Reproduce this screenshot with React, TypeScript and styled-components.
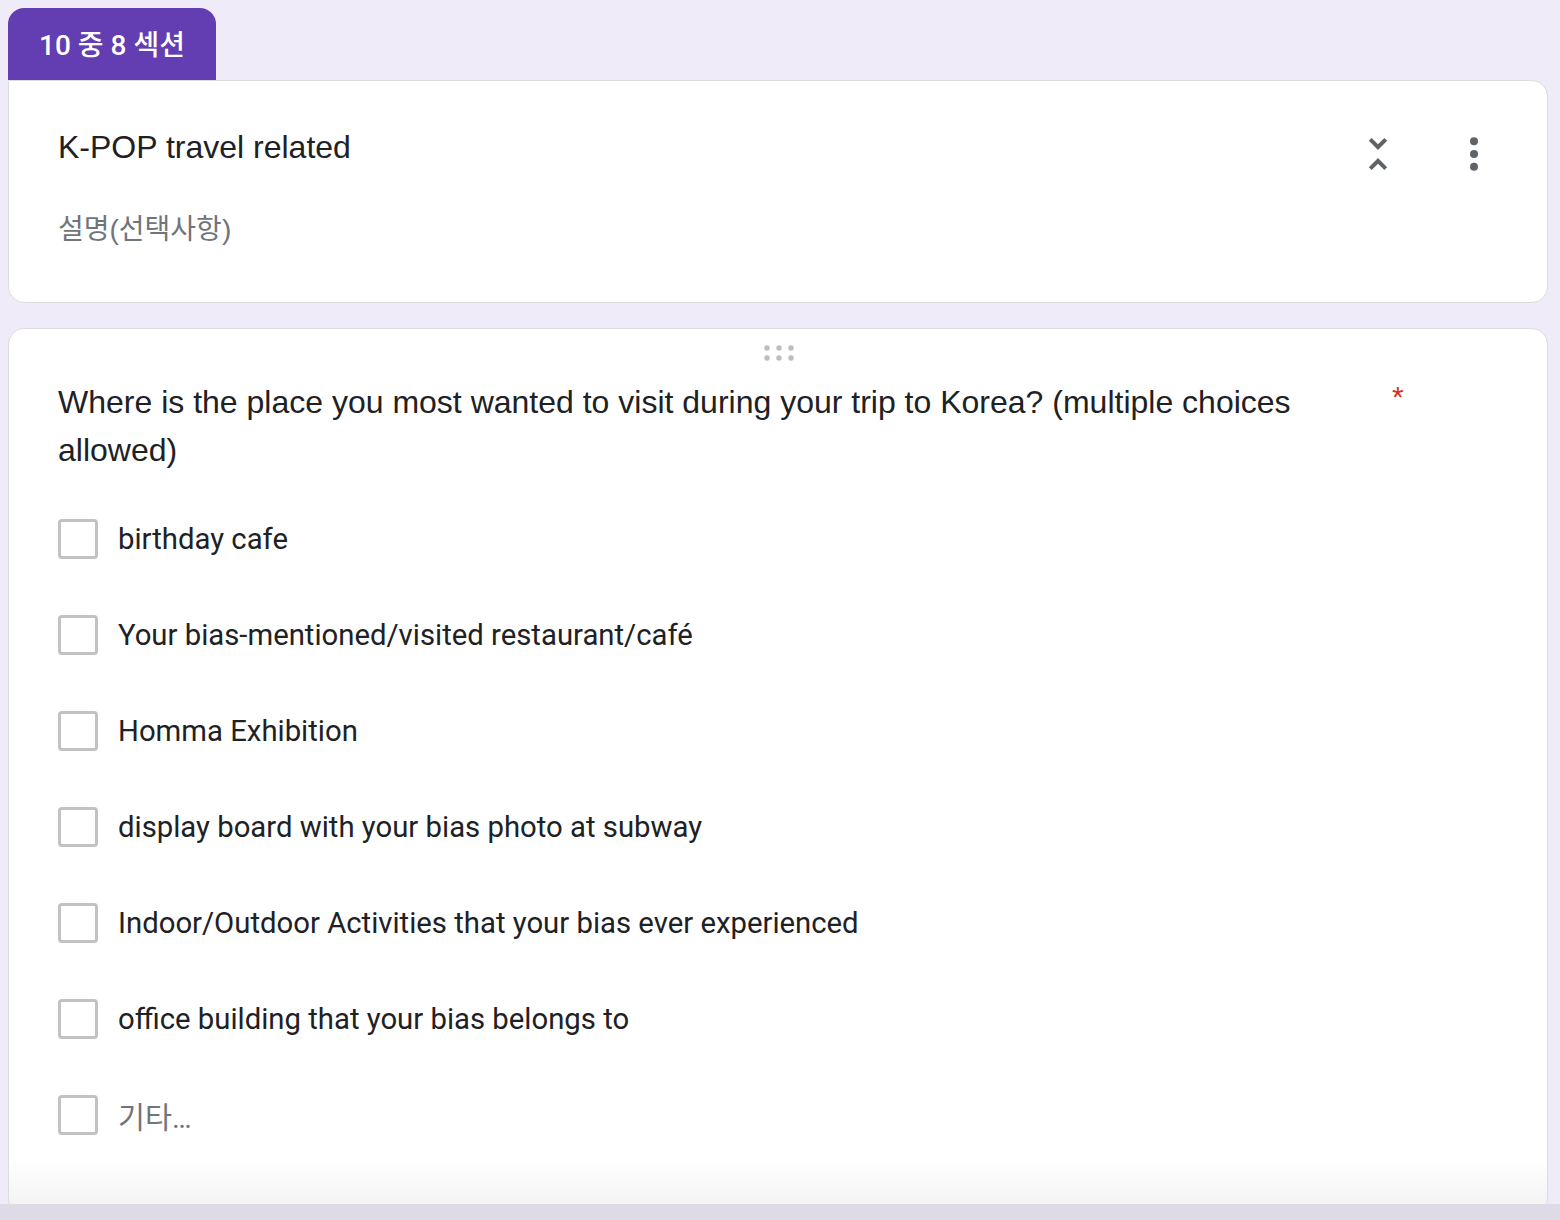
import React from "react";
import styled, { createGlobalStyle } from "styled-components";

const GlobalStyle = createGlobalStyle`
  html, body {
    margin: 0;
    padding: 0;
    background: #f0ebf8;
  }
  body {
    font-family: "Roboto", "Noto Sans CJK KR", sans-serif;
    color: #202124;
  }
`;

const Page = styled.div`
  width: 1560px;
  height: 1220px;
  overflow: hidden;
  display: flex;
  flex-direction: column;
`;

const Content = styled.div`
  padding: 8px 12px 0 8px;
  flex: 1;
  overflow: hidden;
`;

const SectionTab = styled.div`
  box-sizing: border-box;
  width: 208px;
  height: 72px;
  padding-bottom: 3px;
  background: #633db2;
  border-radius: 16px 16px 0 0;
  color: #fff;
  font-size: 28px;
  font-weight: 500;
  display: flex;
  align-items: center;
  justify-content: center;
`;

const Card = styled.div<{ $attached?: boolean }>`
  box-sizing: border-box;
  width: 1540px;
  background: #fff;
  border: 1px solid #dadce0;
  border-radius: ${(p) => (p.$attached ? "0 16px 16px 16px" : "16px")};
`;

const HeaderCard = styled(Card)`
  height: 223px;
  padding: 46px 49px 0 49px;
  display: flex;
  align-items: flex-start;
`;

const HeaderText = styled.div`
  flex: 1;
  display: flex;
  flex-direction: column;
  gap: 43px;
`;

const SectionTitle = styled.div`
  font-family: "Liberation Sans", Arial, "Noto Sans CJK KR", sans-serif;
  font-size: 32px;
  line-height: 40px;
  color: #202124;
`;

const Description = styled.div`
  font-family: "Liberation Sans", Arial, "Noto Sans CJK KR", sans-serif;
  font-size: 28px;
  line-height: 40px;
  color: #70757a;
`;

const Actions = styled.div`
  display: flex;
  gap: 48px;
  margin-top: 3px;
  margin-right: 0;
`;

const IconButton = styled.div`
  width: 48px;
  height: 48px;
  display: flex;
  align-items: center;
  justify-content: center;
  color: #5f6368;
`;

const QuestionCard = styled(Card)`
  margin-top: 25px;
  height: 880px;
  padding: 12px 49px 0 49px;
  border-radius: 16px 16px 8px 8px;
  background: linear-gradient(to bottom, #fff calc(100% - 48px), #f3f3f3);
`;

const DragHandle = styled.div`
  height: 24px;
  display: flex;
  justify-content: center;
  align-items: center;
`;

const QuestionRow = styled.div`
  margin-top: 13px;
  display: flex;
  align-items: flex-start;
`;

const QuestionText = styled.div`
  width: 1322px;
  font-family: "Liberation Sans", Arial, sans-serif;
  font-size: 32px;
  line-height: 48px;
  color: #202124;
`;

const Required = styled.span`
  margin-left: 12px;
  margin-top: 4px;
  color: #d93025;
  font-family: "Liberation Sans", Arial, sans-serif;
  font-size: 30px;
  line-height: 30px;
`;

const Options = styled.div`
  margin-top: 17px;
  display: flex;
  flex-direction: column;
`;

const OptionRow = styled.label`
  height: 96px;
  display: flex;
  align-items: center;
  gap: 20px;
`;

const Box = styled.span`
  box-sizing: border-box;
  width: 40px;
  height: 40px;
  border: 3px solid #c2c2c2;
  border-radius: 4px;
  flex-shrink: 0;
`;

const OptionLabel = styled.span<{ $other?: boolean }>`
  font-family: "Roboto", "Noto Sans CJK KR", sans-serif;
  font-size: 29.3px;
  color: ${(p) => (p.$other ? "#70757a" : "#202124")};
`;

const BottomShade = styled.div`
  height: 16px;
  background: #dfdbe6;
  flex-shrink: 0;
`;

const UnfoldLess = () => (
  <svg width="48" height="48" viewBox="0 0 24 24" fill="currentColor">
    <path d="M7.41 18.59L8.83 20 12 16.83 15.17 20l1.41-1.41L12 14l-4.59 4.59zm9.18-13.18L15.17 4 12 7.17 8.83 4 7.41 5.41 12 10l4.59-4.59z" />
  </svg>
);

const MoreVert = () => (
  <svg width="48" height="48" viewBox="0 0 24 24" fill="currentColor">
    <circle cx="12" cy="5.6" r="2" />
    <circle cx="12" cy="12" r="2" />
    <circle cx="12" cy="18.4" r="2" />
  </svg>
);

const Dots = () => (
  <svg width="40" height="20" viewBox="0 0 40 20" fill="#bdbdbd">
    {[9, 21, 33].map((x) =>
      [5, 15].map((y) => <circle key={`${x}-${y}`} cx={x} cy={y} r="2.7" />)
    )}
  </svg>
);

const options = [
  "birthday cafe",
  "Your bias-mentioned/visited restaurant/café",
  "Homma Exhibition",
  "display board with your bias photo at subway",
  "Indoor/Outdoor Activities that your bias ever experienced",
  "office building that your bias belongs to",
];

export default function App() {
  return (
    <Page>
      <GlobalStyle />
      <Content>
        <SectionTab>10 중 8 섹션</SectionTab>
        <HeaderCard $attached>
          <HeaderText>
            <SectionTitle>K-POP travel related</SectionTitle>
            <Description>설명(선택사항)</Description>
          </HeaderText>
          <Actions>
            <IconButton>
              <UnfoldLess />
            </IconButton>
            <IconButton>
              <MoreVert />
            </IconButton>
          </Actions>
        </HeaderCard>
        <QuestionCard>
          <DragHandle>
            <Dots />
          </DragHandle>
          <QuestionRow>
            <QuestionText>
              Where is the place you most wanted to visit during your trip to
              Korea? (multiple choices allowed)
            </QuestionText>
            <Required>*</Required>
          </QuestionRow>
          <Options>
            {options.map((o) => (
              <OptionRow key={o}>
                <Box />
                <OptionLabel>{o}</OptionLabel>
              </OptionRow>
            ))}
            <OptionRow>
              <Box />
              <OptionLabel $other>기타…</OptionLabel>
            </OptionRow>
          </Options>
        </QuestionCard>
      </Content>
      <BottomShade />
    </Page>
  );
}
